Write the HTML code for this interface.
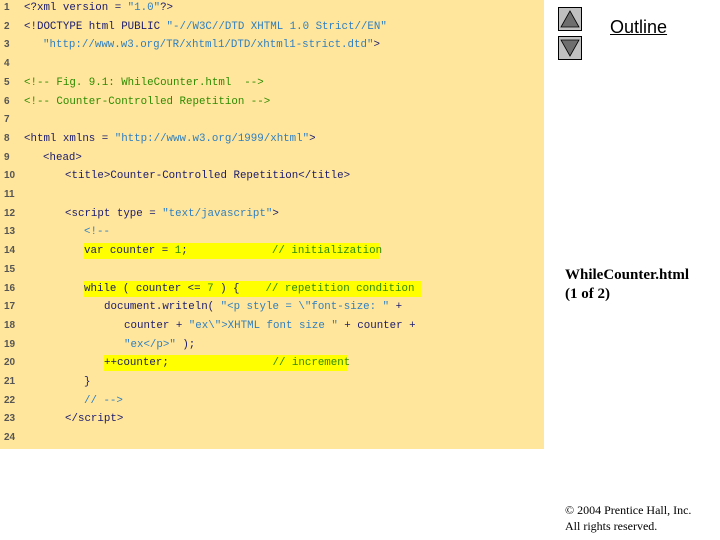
<!DOCTYPE html>
<html><head><style>
body{margin:0;width:720px;height:540px;background:#fff;position:relative;overflow:hidden}
#p{position:absolute;left:0;top:0;width:544px;height:449px;background:#FFE69C}
.l{position:absolute;left:0;height:16px;line-height:16px;font-family:"Liberation Mono",monospace;font-size:10.8px;white-space:pre;color:#1a1a6e;margin-top:1px}
.n{position:absolute;left:4px;color:#555;font-family:"Liberation Sans",sans-serif;font-size:10px;font-weight:bold}
.c{position:absolute}
.s{color:#2f7fc0}.g{color:#2e8b00}.k{color:#1a1a6e}
.h{background:#ffff00}
.btn{position:absolute;left:558px;width:22px;height:22px;background:#c0c0c0;border:1px solid #000}
</style></head><body>
<div id="p"></div>
<div class="l" style="top:-1px"><span class="n">1</span><span class="c" style="left:24px">&lt;?xml version = <span class="s">"1.0"</span>?&gt;</span></div>
<div class="l" style="top:17.7px"><span class="n">2</span><span class="c" style="left:24px">&lt;!DOCTYPE html PUBLIC <span class="s">"-//W3C//DTD XHTML 1.0 Strict//EN"</span></span></div>
<div class="l" style="top:36.4px"><span class="n">3</span><span class="c s" style="left:43px">"http://www.w3.org/TR/xhtml1/DTD/xhtml1-strict.dtd"<span class="k">&gt;</span></span></div>
<div class="l" style="top:55.1px"><span class="n">4</span></div>
<div class="l" style="top:73.8px"><span class="n">5</span><span class="c g" style="left:24px">&lt;!-- Fig. 9.1: WhileCounter.html  --&gt;</span></div>
<div class="l" style="top:92.5px"><span class="n">6</span><span class="c g" style="left:24px">&lt;!-- Counter-Controlled Repetition --&gt;</span></div>
<div class="l" style="top:111.2px"><span class="n">7</span></div>
<div class="l" style="top:129.9px"><span class="n">8</span><span class="c" style="left:24px">&lt;html xmlns = <span class="s">"http://www.w3.org/1999/xhtml"</span>&gt;</span></div>
<div class="l" style="top:148.6px"><span class="n">9</span><span class="c" style="left:43px">&lt;head&gt;</span></div>
<div class="l" style="top:167.3px"><span class="n">10</span><span class="c" style="left:65px">&lt;title&gt;Counter-Controlled Repetition&lt;/title&gt;</span></div>
<div class="l" style="top:186px"><span class="n">11</span></div>
<div class="l" style="top:204.7px"><span class="n">12</span><span class="c" style="left:65px">&lt;script type = <span class="s">"text/javascript"</span>&gt;</span></div>
<div class="l" style="top:223.4px"><span class="n">13</span><span class="c s" style="left:84px">&lt;!--</span></div>
<div class="l" style="top:242.1px"><span class="n">14</span><span class="c h" style="left:84px;width:295px">var counter = <span class="g">1</span>;             <span class="g">// initialization</span></span></div>
<div class="l" style="top:260.8px"><span class="n">15</span></div>
<div class="l" style="top:279.5px"><span class="n">16</span><span class="c h" style="left:84px;width:337px">while ( counter &lt;= <span class="g">7</span> ) {    <span class="g">// repetition condition</span></span></div>
<div class="l" style="top:298.2px"><span class="n">17</span><span class="c" style="left:104px">document.writeln( <span class="s">"&lt;p style = \"font-size: "</span> +</span></div>
<div class="l" style="top:316.9px"><span class="n">18</span><span class="c" style="left:124px">counter + <span class="s">"ex\"&gt;XHTML font size "</span> + counter +</span></div>
<div class="l" style="top:335.6px"><span class="n">19</span><span class="c" style="left:124px"><span class="s">"ex&lt;/p&gt;"</span> );</span></div>
<div class="l" style="top:354.3px"><span class="n">20</span><span class="c h" style="left:104px;width:243px">++counter;                <span class="g">// increment</span></span></div>
<div class="l" style="top:373px"><span class="n">21</span><span class="c" style="left:84px">}</span></div>
<div class="l" style="top:391.7px"><span class="n">22</span><span class="c s" style="left:84px">// --&gt;</span></div>
<div class="l" style="top:410.4px"><span class="n">23</span><span class="c" style="left:65px">&lt;/script&gt;</span></div>
<div class="l" style="top:429.1px"><span class="n">24</span></div>

<div class="btn" style="top:7px"><svg width="22" height="22"><polygon points="11,3 20,19 2,19" fill="#6e6e6e" stroke="#000" stroke-width="0.8"/></svg></div>
<div class="btn" style="top:36px"><svg width="22" height="22"><polygon points="2,3 20,3 11,19" fill="#6e6e6e" stroke="#000" stroke-width="0.8"/></svg></div>
<div style="position:absolute;left:610px;top:17px;font-family:'Liberation Sans',sans-serif;font-size:18px;text-decoration:underline;color:#000">Outline</div>
<div style="position:absolute;left:565px;top:266px;font-family:'Liberation Serif',serif;font-size:15px;font-weight:bold;line-height:19px;color:#000">WhileCounter.html<br>(1 of 2)</div>
<div style="position:absolute;left:565px;top:502px;font-family:'Liberation Serif',serif;font-size:12px;line-height:16px;color:#000">© 2004 Prentice Hall, Inc.<br>All rights reserved.</div>
</body></html>
